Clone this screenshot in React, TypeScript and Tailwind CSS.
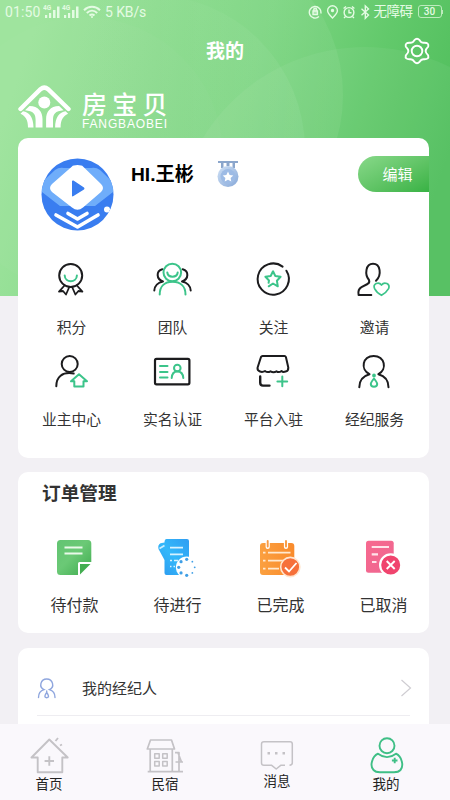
import type { ReactNode } from 'react';

const GREEN = '#3cc48a';
const INK = '#1c1c1e';

interface MenuItem {
    label: string;
    icon: ReactNode;
}

const StatusBar = () => (
    <div className="flex h-[23px] items-center pl-[5px] pr-[7px] font-[Roboto,'Noto_Sans_CJK_SC',sans-serif] text-[14px] leading-none text-[#e4fbe3]">
        <span className="w-[38px] tracking-[0.1px]">01:50</span>
        <svg width="37" height="16" viewBox="0 0 37 16" fill="#e4fbe3">
            <text x="0" y="6" fontSize="6.500" fontWeight="bold">4G</text>
            <path d="M2 11h2.200v3H2zM6 9h2.200v5H6zM10 6h2.500v8H10zM14 2.500h2.500V14H14z" />
            <text x="19" y="6" fontSize="6.500" fontWeight="bold">4G</text>
            <path d="M21 11h2.200v3H21zM25 9h2.200v5H25zM29 6h2.500v8H29zM33 2.500h2.500V14H33z" />
        </svg>
        <svg className="ml-[3px]" width="18" height="14" viewBox="0 0 18 14" fill="none" stroke="#e4fbe3" strokeWidth="2">
            <path d="M1 5.200C5.500 .6 12.500 .6 17 5.200M3.800 8C6.900 5 11.100 5 14.200 8M6.500 10.600C8 9.200 10 9.200 11.500 10.600" />
            <circle cx="9" cy="12" r="1" fill="#e4fbe3" stroke="none" />
        </svg>
        <span className="ml-[4px] tracking-[-0.1px]">5 KB/s</span>
        <div className="ml-auto flex items-center">
            <svg width="64" height="16" viewBox="0 0 64 16" fill="none" stroke="#e4fbe3" strokeWidth="1.400">
                <path d="M11 12.600A5.800 5.800 0 1 1 12.800 9.500" />
                <path d="M5 7h4.400v3.600H5zM5.800 7V5.500a1.400 1.400 0 0 1 2.800 0V7" fill="#e4fbe3" fillOpacity=".5" />
                <path d="M24.500 14C21 10.500 19.600 8.600 19.600 6.700a4.900 4.900 0 0 1 9.800 0C29.400 8.600 28 10.500 24.500 14Z" />
                <circle cx="24.500" cy="6.500" r="1" fill="#e4fbe3" />
                <circle cx="41" cy="8.500" r="4.900" />
                <path d="M41 5.500v3.300h2.500M35.600 4.500l2.400-2M46.400 4.500l-2.400-2M37.500 12.500 36 14M44.500 12.500 46 14" />
                <path d="m53.500 4.800 7 6.200-3.200 3.200V1.800l3.200 3.100-7 6.300" />
            </svg>
            <span className="ml-[2px] w-[41px] text-[13.500px] tracking-[-0.5px]">无障碍</span>
            <span className="ml-[3px] flex h-[13px] w-[24px] items-center justify-center rounded-[3px] border border-[#bdebbd] text-[10px] font-medium">30</span>
            <span className="h-1 w-[1.500px] bg-[#bdebbd]" />
        </div>
    </div>
);

const HeaderBackdrop = () => (
    <svg className="absolute inset-0" width="450" height="296" viewBox="0 0 450 296">
        <defs>
            <linearGradient id="sky" gradientUnits="userSpaceOnUse" x1="20" y1="70" x2="430" y2="210">
                <stop offset="0" stopColor="#9fe49e" />
                <stop offset=".5" stopColor="#7fd684" />
                <stop offset=".78" stopColor="#62c96b" />
                <stop offset="1" stopColor="#50be5c" />
            </linearGradient>
            <linearGradient id="glow" x1="0" y1="0" x2="1" y2="0">
                <stop offset="0" stopColor="#fff" stopOpacity="0" />
                <stop offset=".5" stopColor="#fff" stopOpacity=".01" />
                <stop offset="1" stopColor="#fff" stopOpacity=".06" />
            </linearGradient>
        </defs>
        <rect width="450" height="296" fill="url(#sky)" />
        <circle cx="150" cy="150" r="155" fill="url(#glow)" />
        <circle cx="183" cy="95" r="160" fill="url(#glow)" />
        <circle cx="365" cy="237" r="190" fill="#fff" fillOpacity=".05" />
        <circle cx="85" cy="155" r="138" fill="#fff" fillOpacity=".02" />
    </svg>
);

const Logo = () => (
    <div className="flex items-start text-white">
        <svg width="56" height="44" viewBox="0 0 56 44" fill="none" stroke="#fff">
            <path d="M3.500 25 23.500 5.200Q27.300 2 31.100 5.200L51.500 25" strokeWidth="4.400" strokeLinecap="round" />
            <circle cx="27.300" cy="18.500" r="6" fill="#fff" stroke="none" />
            <path d="M12.500 22C21.500 22 25.500 28 25.500 35V43.500H18.600V36C18.600 30 16.500 27 8 26.200Z" fill="#fff" stroke="none" />
            <path d="M42.100 22C33.100 22 29.100 28 29.100 35V43.500H36V36C36 30 38.100 27 46.600 26.200Z" fill="#fff" stroke="none" />
            <path d="M6 27.200C12 28.200 16.500 33 16.500 43.500H11C11 36.500 9 32.500 3.500 29.800ZM48.600 27.200C42.600 28.200 38.100 33 38.100 43.500H43.600C43.600 36.500 45.600 32.500 51.100 29.800Z" fill="#fff" stroke="none" />
        </svg>
        <div className="ml-[9px] pt-[7px]">
            <p className="h-[24px] text-[25px] font-medium leading-[24px] tracking-[5.200px]">房宝贝</p>
            <p className="mt-[3px] h-3 font-['Liberation_Sans',sans-serif] text-[12px] leading-[12px] tracking-[0.850px]">FANGBAOBEI</p>
        </div>
    </div>
);

const SettingsIcon = () => (
    <svg width="26" height="28" viewBox="-13 -14 26 28" fill="none" stroke="#fff" strokeWidth="1.900" strokeLinejoin="round">
        <path d="M-2.600 -10.900Q0 -13.600 2.600 -10.900Q4.200 -8 7 -8.200Q12.300 -8.500 11.200 -4.400Q8.600 -1.800 8.600 0Q8.600 1.800 11.200 4.400Q12.300 8.500 7 8.200Q4.200 8 2.600 10.900Q0 13.600 -2.600 10.900Q-4.200 8 -7 8.200Q-12.300 8.500 -11.200 4.400Q-8.600 1.800 -8.600 0Q-8.600 -1.800 -11.200 -4.400Q-12.300 -8.500 -7 -8.200Q-4.200 -8 -2.600 -10.900Z" />
        <circle r="5.300" />
    </svg>
);

const Avatar = () => (
    <svg width="73" height="73" viewBox="0 0 73 73">
        <defs>
            <clipPath id="disc"><circle cx="36.500" cy="36.500" r="36" /></clipPath>
        </defs>
        <g clipPath="url(#disc)">
            <rect width="73" height="73" fill="#397df0" />
            <path d="M-3 28 14 12Q18 9 23 10H50Q55 9 59 12L76 28V31L54 48H19L-3 31Z" fill="#6fadfa" />
            <path d="M31 8.500Q32 7 36.500 7T42 8.500L60 26Q64 30 60 34L42 49.500Q36.500 54 31 49.500L11 34Q7 30 11 26Z" fill="#fff" />
            <path d="M31 23.500V37.500Q31 39 32.500 38L43 31.500Q44 30.500 43 29.500L32.500 22.500Q31 22 31 23.500Z" fill="#397df0" />
            <path d="m27 55.500 9.500 5.500 9.500-5.500M15 57l21.500 12L57 57" fill="none" stroke="#fff" strokeWidth="3.600" strokeLinecap="round" strokeLinejoin="round" />
            <circle cx="66" cy="51.500" r="3" fill="#fff" />
        </g>
    </svg>
);

const LevelBadge = () => (
    <svg width="22" height="28" viewBox="0 0 22 28">
        <defs>
            <linearGradient id="medal" x1="0" y1="0" x2="1" y2="1">
                <stop offset="0" stopColor="#cfe0f5" />
                <stop offset="1" stopColor="#86a8d8" />
            </linearGradient>
        </defs>
        <path d="M1 1H21V3H18V8H15.500V3H12.500V6H9.500V3H6.500V8H4V3H1Z" fill="#8ba6cc" />
        <circle cx="11" cy="16.500" r="10.500" fill="url(#medal)" />
        <circle cx="11" cy="16.500" r="7.500" fill="#9dbbe5" />
        <path d="m11 11.500 1.600 3.400 3.700.5-2.700 2.500.7 3.600-3.300-1.800-3.300 1.800.7-3.600-2.700-2.500 3.700-.5Z" fill="#fff" />
    </svg>
);

const LineIcon = ({ children }: { children: ReactNode }) => (
    <svg width="41" height="41" viewBox="0 0 41 41" fill="none" stroke={INK} strokeWidth="2" strokeLinecap="round" strokeLinejoin="round">
        {children}
    </svg>
);

const services: MenuItem[] = [
    {
        label: '积分',
        icon: (
            <LineIcon>
                <circle cx="19.700" cy="16.500" r="11.500" />
                <path d="M13.500 26.500 8 32.700 12 32 15 35.500 18.300 28M25.900 26.500 31.400 32.700 27.400 32 24.400 35.500 21.100 28" strokeWidth="1.800" />
                <path d="M13.700 16.500C14 24 25.600 24 25.900 16.500" stroke={GREEN} />
            </LineIcon>
        ),
    },
    {
        label: '团队',
        icon: (
            <LineIcon>
                <path d="M10.300 10.300C4 12 4 20 11 22.500M11 22.500C6 23.500 2.500 27 2.300 31.500M30.700 10.300C37 12 37 20 30 22.500M30 22.500C35 23.500 38.500 27 38.700 31.500" />
                <g stroke={GREEN}>
                    <circle cx="20.300" cy="13.500" r="8.800" />
                    <path d="M15.300 13.500C16 19 25 19 25.700 13.500M7.700 35.500C7.700 27 13 22.800 20.500 22.800S33.500 27 33.500 35.500" />
                </g>
            </LineIcon>
        ),
    },
    {
        label: '关注',
        icon: (
            <LineIcon>
                <path d="M33.400 11.700A15.600 15.600 0 1 1 29.600 7.600" />
                <path d="M15.700 27.300 20 24.500 24.800 27.300 23.900 21.700 27.600 17.800 22.300 17 20 12.300 17.700 17 12.400 17.800 16 21.500 15.600 23.800" stroke={GREEN} />
            </LineIcon>
        ),
    },
    {
        label: '邀请',
        icon: (
            <LineIcon>
                <path d="M22 21.700C28 16 26.500 4.800 19 4.800S10.500 15.500 15 21Q16 23.500 13.500 25L7.500 28.200Q3.500 30.500 4.600 36H17.300" />
                <path d="M27.500 26C24.500 22 18.500 25 20.600 29.700C22 32.500 25 35 27.500 36.300C30 35 33 32.500 34.600 29.700C36.500 25 30.500 22 27.500 26Z" stroke={GREEN} strokeWidth="1.700" />
            </LineIcon>
        ),
    },
    {
        label: '业主中心',
        icon: (
            <LineIcon>
                <circle cx="18.700" cy="13" r="8" />
                <path d="M5.300 35.300C5.300 26 11 20.500 22.700 22.500" />
                <path d="M28 23.300 20 30.300H23.300V35.600H32.500V30.300H36Z" stroke={GREEN} />
            </LineIcon>
        ),
    },
    {
        label: '实名认证',
        icon: (
            <LineIcon>
                <rect x="3" y="7.900" width="34.400" height="25.400" rx="1.500" strokeWidth="2.200" />
                <g stroke={GREEN}>
                    <path d="M8 15H15.500M8 21H15.500M8 26.500H15.500M19.700 27C20 22 22 20.500 25.300 20.500S31 22 31.300 27" />
                    <circle cx="25.300" cy="17" r="3.300" />
                </g>
            </LineIcon>
        ),
    },
    {
        label: '平台入驻',
        icon: (
            <LineIcon>
                <path d="M9.500 5H31.500Q32.500 5 32.900 6L35.300 16.500Q35.500 20 32.600 20.500Q30 21.500 28.500 20Q26 22 23.500 20.300Q20.500 22 17.500 20.300Q14.500 22 12 20Q9.500 21.500 7 20.500Q4 19.500 4.600 16.500L8 6Q8.500 5 9.500 5Z" />
                <path d="M7.200 25.500V31.500Q7.200 34.600 10 34.600H16.500" strokeWidth="2.400" />
                <path d="M29.300 25.500V35.300M24.400 30.400H34.200" stroke={GREEN} />
            </LineIcon>
        ),
    },
    {
        label: '经纪服务',
        icon: (
            <LineIcon>
                <path d="M5.300 36.300C5.300 29.500 9 25 15.500 23.200C6 18.500 8.500 4.900 19.700 4.900S33.500 18.500 24.400 23.200C31 25 34.500 29.500 34.500 36.300" />
                <g stroke={GREEN}>
                    <circle cx="20" cy="24.500" r=".9" fill={GREEN} />
                    <path d="M20 27.500C18 30 16.800 31.500 16.800 33C16.800 36.500 23.200 36.500 23.200 33C23.200 31.500 22 30 20 27.500Z" />
                </g>
            </LineIcon>
        ),
    },
];

const gearDots = Array.from({ length: 8 }, (_, i) => {
    const a = (i * Math.PI) / 4;
    return { x: 30.7 + 8 * Math.cos(a), y: 31.3 + 8 * Math.sin(a), r: i === 0 || i === 7 || i === 1 ? 0.9 : 1.6 };
});

const orders: MenuItem[] = [
    {
        label: '待付款',
        icon: (
            <svg width="44" height="44" viewBox="0 0 44 44">
                <defs>
                    <linearGradient id="pay" x1="0" y1="0" x2="1" y2="1">
                        <stop offset="0" stopColor="#62c472" />
                        <stop offset=".45" stopColor="#6bc976" />
                        <stop offset="1" stopColor="#3dab4d" />
                    </linearGradient>
                </defs>
                <path d="M7.500 4H35Q38.300 4 38.300 7.500V26H26.500Q25 26 25 27.500V39H7.500Q4 39 4 35.500V7.500Q4 4 7.500 4Z" fill="url(#pay)" />
                <path d="M27 28H37.500L27 38.500Z" fill="#43ad50" />
                <path d="M11.500 11.500H29.500M11.500 17.500H29.500" stroke="#e9f9e9" strokeWidth="1.800" />
            </svg>
        ),
    },
    {
        label: '待进行',
        icon: (
            <svg width="44" height="44" viewBox="0 0 44 44">
                <defs>
                    <linearGradient id="doing" x1="1" y1="0" x2="0" y2="1">
                        <stop offset="0" stopColor="#2f9df2" />
                        <stop offset=".5" stopColor="#33b8fa" />
                        <stop offset="1" stopColor="#2c97ee" />
                    </linearGradient>
                </defs>
                <path d="M10.500 3H31Q33 3 33 5V37Q33 39 31 39H10.500Q8.500 39 8.500 37V24L2.500 13Q1.500 9 4.500 7.300L8.500 6.500Q8.500 3 10.500 3Z" fill="url(#doing)" />
                <path d="m3.500 12.500 5-3" stroke="#c9edff" strokeWidth="1.700" />
                <path d="M14 11.700H27M14 18.300H27M14 24.500H16M18 24.500H22M14 30.500H15.500M17.500 30.500H19" stroke="#d7f2ff" strokeWidth="1.700" />
                <circle cx="30.700" cy="31.300" r="10.800" fill="#fff" />
                {gearDots.map((d, i) => (
                    <circle key={i} cx={d.x} cy={d.y} r={d.r} fill="#3f9fe6" />
                ))}
            </svg>
        ),
    },
    {
        label: '已完成',
        icon: (
            <svg width="44" height="44" viewBox="0 0 44 44">
                <defs>
                    <linearGradient id="done" x1="0" y1="0" x2="1" y2="0">
                        <stop offset="0" stopColor="#fba040" />
                        <stop offset="1" stopColor="#f98b2c" />
                    </linearGradient>
                </defs>
                <rect x="1" y="7" width="34.300" height="32" rx="3" fill="url(#done)" />
                <path d="M8.700 4.500V11M27 4.500V11" stroke="#fff" strokeWidth="4.200" strokeLinecap="round" />
                <path d="M8.700 5V10.500M27 5V10.500" stroke="#f99a42" strokeWidth="1.900" strokeLinecap="round" />
                <path d="M4 16.700H6.500M9 16.700H31.500M4 24.700H6.500M9 24.700H24M4 32.700H6.500M9 32.700H20" stroke="#ffe9d0" strokeWidth="1.700" />
                <circle cx="31.300" cy="31" r="9.600" fill="#f6703a" stroke="#ffe6d0" strokeWidth="1.600" />
                <path d="m26 31.500 4 4 7.500-8.500" fill="none" stroke="#fff" strokeWidth="1.800" />
            </svg>
        ),
    },
    {
        label: '已取消',
        icon: (
            <svg width="44" height="44" viewBox="0 0 44 44">
                <defs>
                    <linearGradient id="cancel" x1="0" y1="0" x2="1" y2="1">
                        <stop offset="0" stopColor="#f7698f" />
                        <stop offset="1" stopColor="#ee6690" />
                    </linearGradient>
                </defs>
                <rect x="4" y="4.700" width="27.700" height="32" rx="2.500" fill="url(#cancel)" />
                <path d="M9.700 11H27M9.700 18.300H16M10 26H14.500" stroke="#ffe3ea" strokeWidth="2.200" />
                <circle cx="28.700" cy="29" r="10.600" fill="#f0446e" stroke="#fff" strokeWidth="2.200" />
                <path d="m24.700 25 8 8M32.700 25l-8 8" stroke="#fff" strokeWidth="1.900" />
            </svg>
        ),
    },
];

const TabIcon = ({ color, children }: { color: string; children: ReactNode }) => (
    <svg width="44" height="40" viewBox="0 0 44 40" fill="none" stroke={color} strokeWidth="1.900" strokeLinejoin="round">
        {children}
    </svg>
);

const tabs: MenuItem[] = [
    {
        label: '首页',
        icon: (
            <TabIcon color="#c4c2c6">
                <path d="M22.300 4.500 4.500 22.500H10.700V37.300H35.300V22.500H40.700ZM22.300 21.300V30.700M17.600 26H27M28.500 6 31 3M33 10.500 35 9.500" />
            </TabIcon>
        ),
    },
    {
        label: '民宿',
        icon: (
            <TabIcon color="#c4c2c6">
                <path d="M7.500 5H28.500L31.500 14H4.300ZM7.200 14V36.500M29.300 14V36.500M4.700 36.700H40M32 17.700H36V36.500M35 17.700 38.500 27M32.500 27H40" strokeWidth="1.700" />
                <path d="M11.700 18.700H16.200V23.200H11.700ZM19.700 18.700H24.200V23.200H19.700ZM11.700 26.500H16.200V31H11.700ZM19.700 26.500H24.200V31H19.700Z" strokeWidth="1.500" />
            </TabIcon>
        ),
    },
    {
        label: '消息',
        icon: (
            <TabIcon color="#c4c2c6">
                <path d="M30 30.300H25.700L21.200 34 16.700 30.300H9Q6.500 30.300 6.500 28V9Q6.500 6.800 9 6.800H35Q37.300 6.800 37.300 9V28Q37.300 30 34.500 30.300" strokeWidth="1.500" />
                <path d="M12.500 18.300H15M20 18.300H22.500M27.500 18.300H30" strokeWidth="2.600" />
            </TabIcon>
        ),
    },
    {
        label: '我的',
        icon: (
            <TabIcon color="#3fbf86">
                <circle cx="23" cy="10.700" r="7.500" />
                <path d="M14 18.700C8 21.500 5.500 31 9.500 35Q11.500 37.200 16 37.200H30Q34.500 37.200 36.500 35C40 31 38 21.500 32 18.700Q23 25.500 14 18.700ZM30.700 22.700V28.300M27.900 25.500H33.500" />
            </TabIcon>
        ),
    },
];

const ProfileCard = () => (
    <section className="h-[320px] rounded-[10px] bg-white">
        <div className="flex h-[121px] items-start pl-[23px]">
            <div className="mt-5">
                <Avatar />
            </div>
            <h2 className="ml-[17px] mt-[23px] w-[86px] font-['Liberation_Sans','Noto_Sans_CJK_SC',sans-serif] text-[19.200px] font-bold leading-[27px] text-black">HI.王彬</h2>
            <div className="mt-[22px]">
                <LevelBadge />
            </div>
            <button className="ml-auto mt-[18px] h-9 w-[71px] rounded-l-full bg-gradient-to-br from-[#88d98a] to-[#37b244] pl-2 text-[15px] text-white">编辑</button>
        </div>
        <div className="grid grid-cols-[repeat(4,101px)] pl-[3px]">
            {services.map((item) => (
                <div key={item.label} className="flex h-[92px] flex-col items-center">
                    {item.icon}
                    <span className="mt-[16px] text-[14.800px] leading-[21px] text-[#333]">{item.label}</span>
                </div>
            ))}
        </div>
    </section>
);

const OrderCard = () => (
    <section className="mt-[14px] h-[161px] rounded-[10px] bg-white">
        <h3 className="pl-6 pt-[6px] text-[18.700px] font-bold leading-7 text-[#333]">订单管理</h3>
        <div className="mt-[30px] grid grid-cols-[repeat(4,103px)] pl-[5.500px]">
            {orders.map((item) => (
                <div key={item.label} className="flex flex-col items-center">
                    {item.icon}
                    <span className="mr-px mt-[12px] text-[16px] leading-6 text-[#333]">{item.label}</span>
                </div>
            ))}
        </div>
    </section>
);

const AgentRow = () => (
    <section className="mt-[15px] h-[90px] rounded-t-[10px] bg-white px-[19px]">
        <div className="flex h-[68px] items-center border-b border-[#eeedf1] pt-[13px]">
            <svg width="20" height="22" viewBox="0 0 20 22" fill="none" stroke="#8fa6de" strokeWidth="1.400" strokeLinecap="round">
                <path d="M1.500 20.500C1.500 16.500 3.500 13.800 7 12.700C1.500 10 3.500 2 9.700 2S18 10 12.500 12.700C16 13.800 18 16.500 18 20.500" />
                <path d="M9.700 14V15.500M9.700 15.500Q6 20.500 9.700 20.700Q13.400 20.500 9.700 15.500" />
            </svg>
            <span className="ml-[25px] text-[15px] leading-[22px] text-[#333]">我的经纪人</span>
            <svg className="ml-auto -mr-[2px]" width="12" height="18" viewBox="0 0 12 18" fill="none" stroke="#cfcdd2" strokeWidth="1.200">
                <path d="m1.500 1 9 8-9 8" />
            </svg>
        </div>
    </section>
);

const TabBar = () => (
    <nav className="relative grid h-[76px] grid-cols-[98px_134px_90px_128px] bg-[#faf8fc] pt-[11px]">
        {tabs.map((tab) => (
            <div key={tab.label} className="flex flex-col items-center">
                {tab.icon}
                <span className={tab.label === '消息' ? '-mt-[5px] text-[13.500px] leading-5 text-[#222]' : '-mt-[2px] text-[13.500px] leading-5 text-[#222]'}>{tab.label}</span>
            </div>
        ))}
    </nav>
);

export default function App() {
    return (
        <div className="flex h-[800px] w-[450px] flex-col overflow-hidden bg-[#f2f0f4] font-['Noto_Sans_CJK_SC',sans-serif]">
            <header className="relative h-[296px] shrink-0">
                <HeaderBackdrop />
                <div className="relative">
                    <StatusBar />
                    <div className="grid h-[55px] grid-cols-3 items-center px-5">
                        <h1 className="col-start-2 text-center text-[19px] font-bold text-white">我的</h1>
                        <div className="justify-self-end">
                            <SettingsIcon />
                        </div>
                    </div>
                    <div className="pl-[17px] pt-[6px]">
                        <Logo />
                    </div>
                </div>
            </header>
            <main className="relative -mt-[158px] h-[586px] shrink-0 overflow-hidden pl-[18px] pr-[21px]">
                <ProfileCard />
                <OrderCard />
                <AgentRow />
            </main>
            <TabBar />
        </div>
    );
}
